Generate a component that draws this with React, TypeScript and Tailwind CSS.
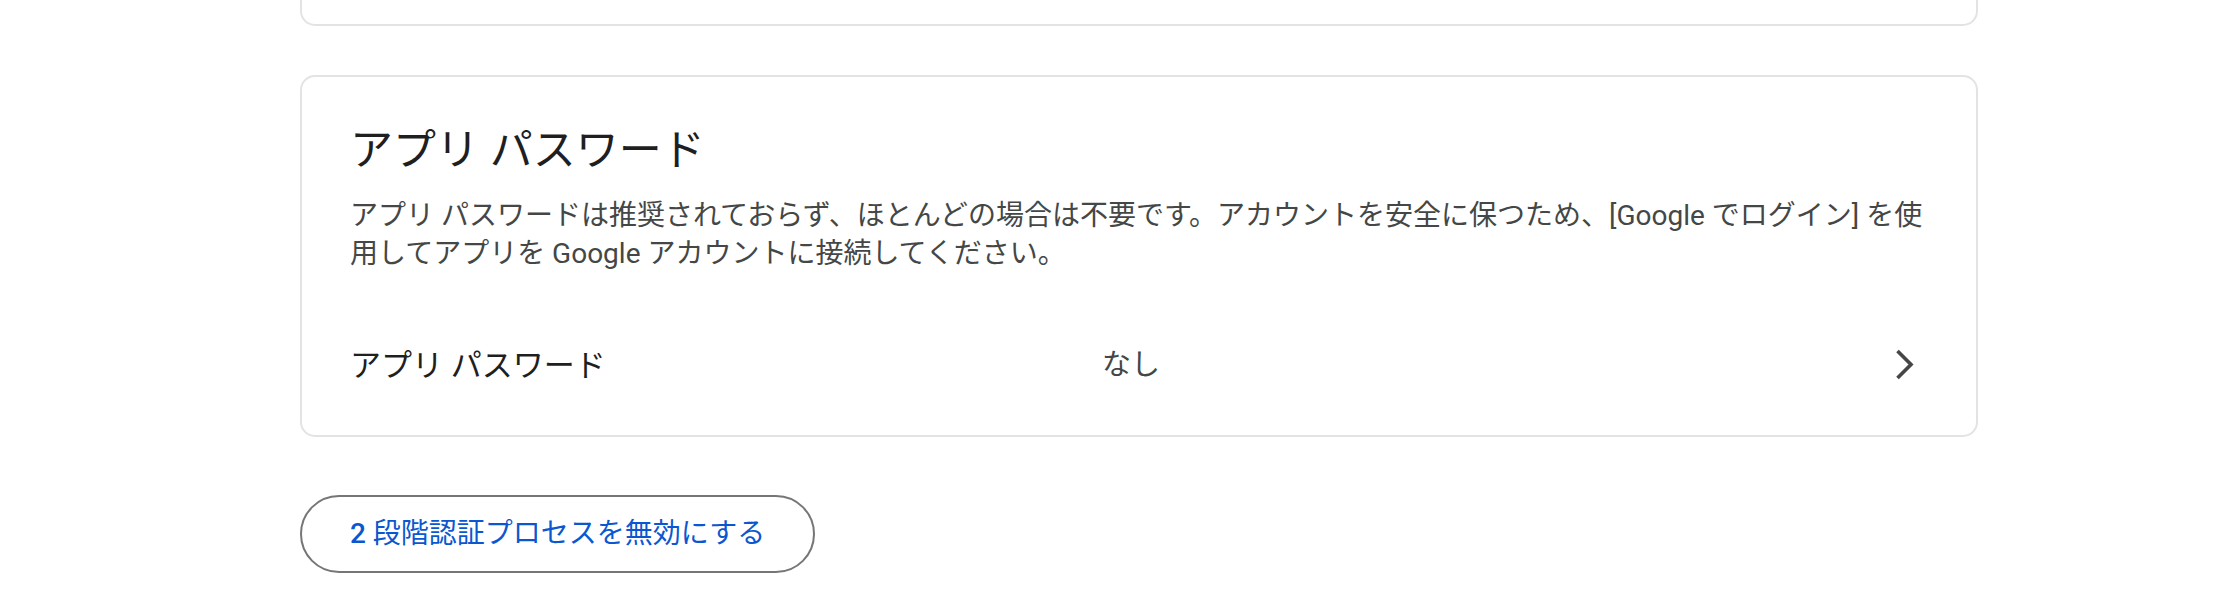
export default function App() {
  return (
    <div className="w-[2232px] h-[604px] bg-white overflow-hidden font-[Roboto,'Noto_Sans_CJK_JP',sans-serif]">
      <div className="pl-[300px]">
        <div className="w-[1678px]">
          <div className="h-[26px] border-2 border-t-0 border-[#e3e3e3] rounded-b-[15px]" />
          <section className="mt-[49px] border-2 border-[#e3e3e3] rounded-[15px] px-[48px] pt-[46px] pb-[33px]">
            <h2 className="text-[43px] leading-[54px] text-[#1f1f1f] font-normal">アプリ パスワード</h2>
            <p className="mt-[20px] text-[28px] leading-[38px] text-[#444746]">
              アプリ パスワードは推奨されておらず、ほとんどの場合は不要です。アカウントを安全に保つため、[Google でログイン] を使用してアプリを Google アカウントに接続してください。
            </p>
            <div className="mt-[57px] h-[72px] flex items-center">
              <div className="w-[752px] text-[31px] text-[#1f1f1f]">アプリ パスワード</div>
              <div className="flex-1 text-[29px] text-[#444746]">なし</div>
              <svg width="20" height="32" viewBox="0 0 20 32" className="mr-[14px] -mt-[4px]">
                <polyline points="3.5,3 17,16.5 3.5,30" fill="none" stroke="#444746" strokeWidth="3.6" strokeLinecap="butt" strokeLinejoin="miter" />
              </svg>
            </div>
          </section>
          <button className="mt-[58px] h-[78px] px-[48px] rounded-full border-2 border-[#747775] bg-white text-[#0b57d0] text-[28px] font-normal flex items-center">
            <span className="font-medium">2</span>&nbsp;段階認証プロセスを無効にする
          </button>
        </div>
      </div>
    </div>
  );
}
